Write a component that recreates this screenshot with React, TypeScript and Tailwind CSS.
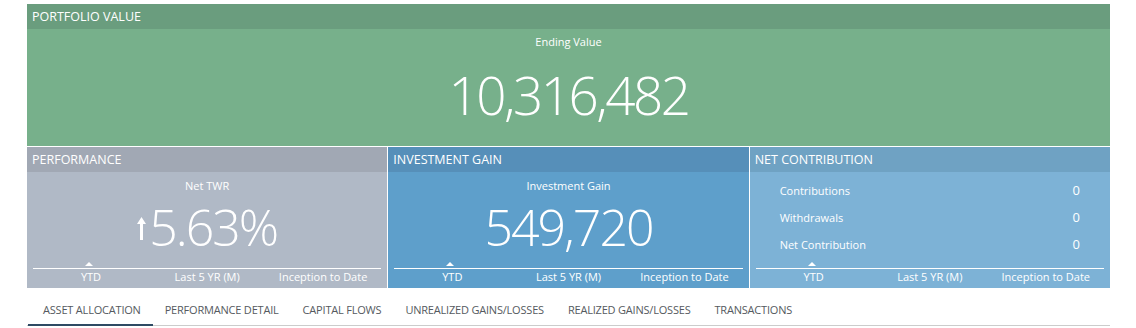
import React from "react";

const font = { fontFamily: '"Open Sans", "Noto Sans", sans-serif' };

function Periods() {
  return (
    <div className="px-[6px] pb-[4px]">
      <div className="relative h-[6px]">
        <div className="absolute left-[52px] top-0 h-0 w-0 border-x-[4px] border-b-[4px] border-x-transparent border-b-white" />
      </div>
      <div className="h-px bg-white" />
      <div className="grid grid-cols-3 text-[11px] leading-[15px] text-white">
        <span className="w-[116px] text-center">YTD</span>
        <span className="text-center">Last 5 YR (M)</span>
        <span className="text-right pr-[14px]">Inception to Date</span>
      </div>
    </div>
  );
}

function Panel({
  title,
  head,
  body,
  children,
}: {
  title: string;
  head: string;
  body: string;
  children: React.ReactNode;
}) {
  return (
    <div className={`flex flex-1 flex-col ${body}`}>
      <div className={`h-[25px] pl-[5px] text-[12.5px] leading-[26px] text-white ${head}`}>{title}</div>
      <div className="flex flex-1 flex-col justify-between">{children}</div>
    </div>
  );
}

const tabs = [
  "ASSET ALLOCATION",
  "PERFORMANCE DETAIL",
  "CAPITAL FLOWS",
  "UNREALIZED GAINS/LOSSES",
  "REALIZED GAINS/LOSSES",
  "TRANSACTIONS",
];

export default function App() {
  return (
    <div className="h-[328px] w-[1136px] bg-white pt-[4px]" style={font}>
      <div className="ml-[27px] w-[1083px]">
        <div className="bg-[#77b08b]">
          <div className="h-[25px] bg-[#6a9d7e] pl-[5px] text-[12.5px] leading-[26px] text-white">PORTFOLIO VALUE</div>
          <div className="h-[117px] text-center text-white">
            <div className="pt-[3px] text-[11px] leading-[20px]">Ending Value</div>
            <div className="mt-[13px] text-[53px] font-light leading-[60px] tracking-[-2.5px]">10,316,482</div>
          </div>
        </div>
        <div className="mt-px flex h-[141px] gap-px">
          <Panel title="PERFORMANCE" head="bg-[#a1a8b4]" body="bg-[#b0b9c6]">
            <div className="text-center text-white">
              <div className="pt-[4px] text-[11px] leading-[20px]">Net TWR</div>
              <div className="mt-[2px] flex items-center justify-center text-[50px] font-light leading-[58px] tracking-[-2px]">
                <svg width="9" height="23" viewBox="0 0 9 23" className="mr-[3px] mt-[2px]">
                  <path d="M4.5 0 L9 7 L6 7 L6 23 L3 23 L3 7 L0 7 Z" fill="white" />
                </svg>
                5.63%
              </div>
            </div>
            <Periods />
          </Panel>
          <Panel title="INVESTMENT GAIN" head="bg-[#568fb9]" body="bg-[#5e9fcb]">
            <div className="text-center text-white">
              <div className="pt-[4px] text-[11px] leading-[20px]">Investment Gain</div>
              <div className="mt-[2px] text-[50px] font-light leading-[58px] tracking-[-2px]">549,720</div>
            </div>
            <Periods />
          </Panel>
          <Panel title="NET CONTRIBUTION" head="bg-[#6fa2c3]" body="bg-[#7db2d6]">
            <div className="flex flex-col gap-[10px] pl-[30px] pr-[30px] pt-[10px] text-[11px] leading-[17px] text-white">
              <div className="flex justify-between">
                <span>Contributions</span>
                <span className="text-[13px]">0</span>
              </div>
              <div className="flex justify-between">
                <span>Withdrawals</span>
                <span className="text-[13px]">0</span>
              </div>
              <div className="flex justify-between">
                <span>Net Contribution</span>
                <span className="text-[13px]">0</span>
              </div>
            </div>
            <Periods />
          </Panel>
        </div>
        <div className="mt-[12px] flex border-b border-[#cccccc] pl-px">
          {tabs.map((t, i) => (
            <div
              key={t}
              className={`px-[12px] pb-[4px] text-[11px] leading-[20px] tracking-[-0.2px] text-[#555a60] ${
                i === 0 ? "-mb-px border-b-2 border-[#2e4a63] pl-[15px]" : ""
              }`}
            >
              {t}
            </div>
          ))}
        </div>
      </div>
    </div>
  );
}
